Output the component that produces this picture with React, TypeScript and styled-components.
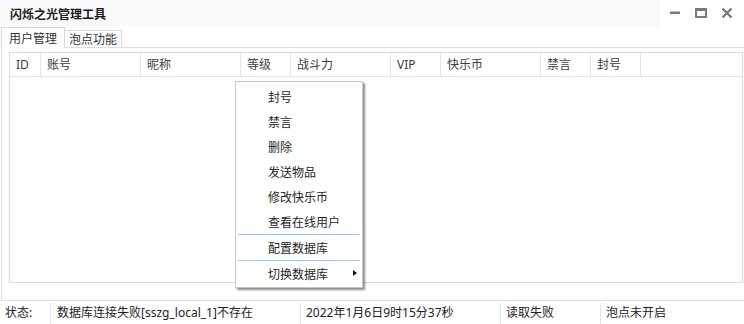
import React from "react";
import styled, { createGlobalStyle } from "styled-components";

const Global = createGlobalStyle`
  *, *::before, *::after { box-sizing: border-box; }
  html, body { margin: 0; padding: 0; background: #fff; }
  body {
    font-family: "Noto Sans", "Noto Sans CJK SC", sans-serif;
    font-size: 12px;
    color: #333;
  }
`;

const Window = styled.div`
  position: relative;
  width: 744px;
  height: 324px;
  overflow: hidden;
  background: #fff;
  display: flex;
  flex-direction: column;
`;

const TitleBar = styled.div`
  height: 26px;
  flex-shrink: 0;
  display: flex;
  align-items: stretch;
`;

const Title = styled.div`
  width: 660px;
  background: #f9f9f9;
  padding-left: 10px;
  font-family: "Noto Sans CJK SC", sans-serif;
  font-weight: 700;
  font-size: 12px;
  line-height: 27px;
  color: #1a1a1a;
`;

const Controls = styled.div`
  display: flex;
  margin-left: 2px;
`;

const CtrlButton = styled.div`
  width: 26px;
  height: 26px;
  display: flex;
  align-items: center;
  justify-content: center;
`;

const TabStrip = styled.div`
  height: 21px;
  flex-shrink: 0;
  display: flex;
  align-items: flex-end;
  padding-left: 1px;
  position: relative;
  z-index: 1;
`;

const Tab = styled.div<{ $active?: boolean }>`
  font-family: "Noto Sans CJK SC", sans-serif;
  font-size: 12px;
  color: #333;
  background: #fff;
  border-top: 1px solid #d9d9d9;
  border-right: 1px solid #d9d9d9;
  border-left: ${(p) => (p.$active ? "1px solid #d9d9d9" : "none")};
  height: ${(p) => (p.$active ? "21px" : "17px")};
  margin-bottom: ${(p) => (p.$active ? "-1px" : "0")};
  padding: ${(p) => (p.$active ? "0 7px 0 7px" : "0 4px 0 4px")};
  line-height: ${(p) => (p.$active ? "19px" : "16px")};
`;

const Panel = styled.div`
  margin-left: 1px;
  width: 760px;
  height: 254px;
  flex-shrink: 0;
  border: 1px solid #dedede;
  padding: 4px 0 0 7px;
`;

const ListView = styled.div`
  width: 734px;
  height: 231px;
  border: 1px solid #dadada;
  background: #fff;
`;

const HeaderRow = styled.div`
  display: grid;
  grid-template-columns: 31px 100px 100px 50px 100px 50px 100px 50px 50px 1fr;
  height: 24px;
  border-bottom: 1px solid #e3e3e3;
`;

const HeaderCell = styled.div<{ $last?: boolean }>`
  border-right: ${(p) => (p.$last ? "none" : "1px solid #e3e3e3")};
  padding-left: 6px;
  font-family: "Noto Sans", "Noto Sans CJK SC", sans-serif;
  font-size: 12px;
  line-height: 23px;
  color: #3d3d3d;
  white-space: nowrap;
`;

const StatusBar = styled.div`
  height: 23px;
  flex-shrink: 0;
  display: flex;
  padding-top: 2px;
`;

const StatusCell = styled.div<{ $w?: number; $first?: boolean; $pad?: number }>`
  width: ${(p) => (p.$w ? `${p.$w}px` : "auto")};
  flex: ${(p) => (p.$w ? "0 0 auto" : "1 1 auto")};
  border-left: ${(p) => (p.$first ? "none" : "1px solid #d6e7f7")};
  padding-left: ${(p) => p.$pad ?? 5}px;
  font-size: 12px;
  line-height: 20px;
  color: #222;
  white-space: nowrap;
`;

const Menu = styled.div`
  position: absolute;
  left: 235px;
  top: 81px;
  width: 128px;
  background: #fff;
  border: 1px solid #c9c9c9;
  padding: 2px 2px 1px 2px;
  box-shadow: 2px 2px 2px rgba(0, 0, 0, 0.45);
  z-index: 10;
`;

const MenuItem = styled.div`
  height: 25px;
  display: flex;
  align-items: center;
  justify-content: space-between;
  padding-left: 30px;
  padding-right: 3px;
  font-family: "Noto Sans CJK SC", sans-serif;
  font-size: 12px;
  line-height: 25px;
  color: #262626;
`;

const MenuSeparator = styled.div`
  height: 1px;
  background: #96c8f0;
`;

const SubArrow = styled.span`
  width: 0;
  height: 0;
  border-top: 3.5px solid transparent;
  border-bottom: 3.5px solid transparent;
  border-left: 4px solid #111;
  margin-top: -1px;
`;

const columns = ["ID", "账号", "昵称", "等级", "战斗力", "VIP", "快乐币", "禁言", "封号", ""];

const CtrlColor = "#7a7a7a";

export default function App() {
  return (
    <>
      <Global />
      <Window>
        <TitleBar>
          <Title>闪烁之光管理工具</Title>
          <Controls>
            <CtrlButton>
              <svg width="12" height="12" viewBox="0 0 12 12">
                <rect x="1" y="4.5" width="10" height="2.6" fill={CtrlColor} />
              </svg>
            </CtrlButton>
            <CtrlButton>
              <svg width="14" height="12" viewBox="0 0 14 12">
                <path
                  d="M1 1 H13 V11 H1 Z M3 4 V9 H11 V4 Z"
                  fill={CtrlColor}
                  fillRule="evenodd"
                />
              </svg>
            </CtrlButton>
            <CtrlButton>
              <svg width="12" height="12" viewBox="0 0 12 12">
                <path
                  d="M1.5 1.5 L10.5 10.5 M10.5 1.5 L1.5 10.5"
                  stroke={CtrlColor}
                  strokeWidth="2.4"
                />
              </svg>
            </CtrlButton>
          </Controls>
        </TitleBar>

        <TabStrip>
          <Tab $active>用户管理</Tab>
          <Tab>泡点功能</Tab>
        </TabStrip>

        <Panel>
          <ListView>
            <HeaderRow>
              {columns.map((c, i) => (
                <HeaderCell key={i} $last={i === columns.length - 1}>
                  {c}
                </HeaderCell>
              ))}
            </HeaderRow>
          </ListView>
        </Panel>

        <StatusBar>
          <StatusCell $w={50} $first>
            状态:
          </StatusCell>
          <StatusCell $w={250} $pad={6}>
            数据库连接失败[sszg_local_1]不存在
          </StatusCell>
          <StatusCell $w={200}>2022年1月6日9时15分37秒</StatusCell>
          <StatusCell $w={100}>读取失败</StatusCell>
          <StatusCell>泡点未开启</StatusCell>
        </StatusBar>

        <Menu>
          <MenuItem>封号</MenuItem>
          <MenuItem>禁言</MenuItem>
          <MenuItem>删除</MenuItem>
          <MenuItem>发送物品</MenuItem>
          <MenuItem>修改快乐币</MenuItem>
          <MenuItem>查看在线用户</MenuItem>
          <MenuSeparator />
          <MenuItem>配置数据库</MenuItem>
          <MenuSeparator />
          <MenuItem>
            切换数据库
            <SubArrow />
          </MenuItem>
        </Menu>
      </Window>
    </>
  );
}
